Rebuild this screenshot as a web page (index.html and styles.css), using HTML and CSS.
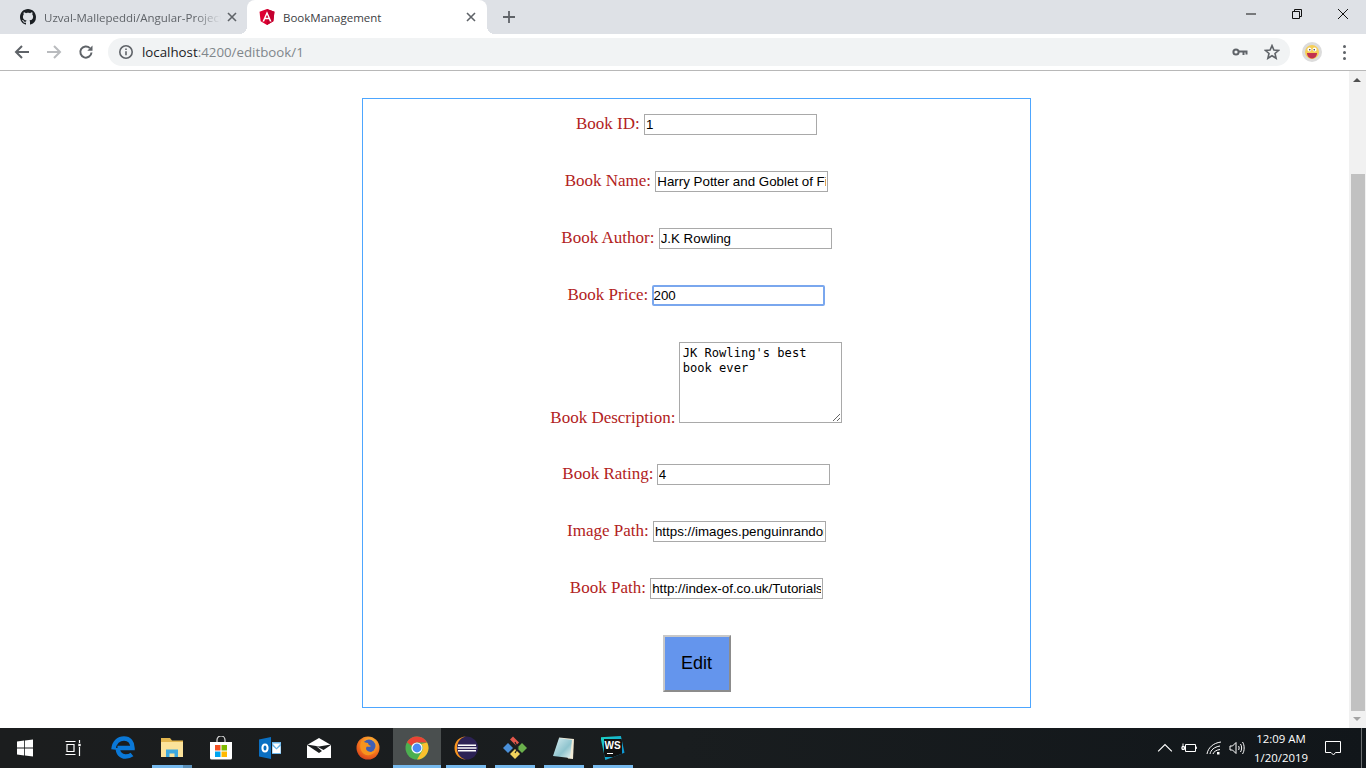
FILE: index.html
```html
<!DOCTYPE html>
<html lang="en">
<head>
    <meta charset="UTF-8">
    <meta name="viewport" content="width=device-width, initial-scale=1.0">
    <title>BookManagement</title>
    <link rel="stylesheet" href="styles.css">
</head>
<body>
<div class="screen">
    <!-- Browser tabs -->
    <div class="tabstrip">
        <div class="tab">
            <svg class="favicon" viewBox="0 0 16 16"><path fill="#1b1f23" d="M8 0C3.58 0 0 3.58 0 8c0 3.54 2.29 6.53 5.47 7.59.4.07.55-.17.55-.38 0-.19-.01-.82-.01-1.49-2.01.37-2.53-.49-2.69-.94-.09-.23-.48-.94-.82-1.13-.28-.15-.68-.52-.01-.53.63-.01 1.08.58 1.23.82.72 1.21 1.87.87 2.33.66.07-.52.28-.87.51-1.07-1.78-.2-3.64-.89-3.64-3.95 0-.87.31-1.59.82-2.15-.08-.2-.36-1.02.08-2.12 0 0 .67-.21 2.2.82.64-.18 1.32-.27 2-.27.68 0 1.36.09 2 .27 1.53-1.04 2.2-.82 2.2-.82.44 1.1.16 1.92.08 2.12.51.56.82 1.27.82 2.15 0 3.07-1.87 3.75-3.65 3.95.29.25.54.73.54 1.48 0 1.07-.01 1.93-.01 2.2 0 .21.15.46.55.38A8.013 8.013 0 0016 8c0-4.42-3.58-8-8-8z"/></svg>
            <span class="tab-title tab-title-fade">Uzval-Mallepeddi/Angular-Project</span>
            <svg class="tab-close" viewBox="0 0 10 10"><path d="M1 1l8 8M9 1l-8 8"/></svg>
        </div>
        <div class="tab tab-active">
            <svg class="favicon" viewBox="0 0 250 250"><path fill="#dd0031" d="M125 0L8 42l18 150 99 58 99-58 18-150z"/><path fill="#c3002f" d="M125 0v250l99-58 18-150z"/><path fill="#fff" d="M125 36L54 196h27l14-35h60l14 35h27L125 36zm21 102h-42l21-50z"/></svg>
            <span class="tab-title">BookManagement</span>
            <svg class="tab-close" viewBox="0 0 10 10"><path d="M1 1l8 8M9 1l-8 8"/></svg>
        </div>
        <svg class="new-tab" viewBox="0 0 14 14"><path d="M7 1v12M1 7h12"/></svg>
        <div class="window-controls">
            <svg viewBox="0 0 12 12"><path d="M1 6h10"/></svg>
            <svg viewBox="0 0 12 12"><path d="M1.5 3.500h7v7h-7zM3.500 3.500v-2h7v7h-2"/></svg>
            <svg viewBox="0 0 12 12"><path d="M1 1l10 10M11 1L1 11"/></svg>
        </div>
    </div>

    <!-- Address bar -->
    <div class="toolbar">
        <div class="nav-btn">
            <svg viewBox="0 0 16 16"><path d="M15 8H2M8 2L2 8l6 6"/></svg>
        </div>
        <div class="nav-btn nav-btn-off">
            <svg viewBox="0 0 16 16"><path d="M1 8h13M8 2l6 6-6 6"/></svg>
        </div>
        <div class="nav-btn">
            <svg viewBox="0 0 16 16"><path d="M13.500 8.500a5.600 5.600 0 1 1-1.600-4.400"/><path class="solid" d="M14.500 1.500v5.200H9.300z"/></svg>
        </div>
        <div class="omnibox">
            <svg class="omni-icon" viewBox="0 0 16 16"><circle cx="8" cy="8" r="6.200"/><path d="M8 7.200v4M8 4.400v1.600"/></svg>
            <span class="url"><span class="url-host">localhost</span>:4200/editbook/1</span>
            <svg class="omni-icon omni-key" viewBox="0 0 16 16"><circle cx="4" cy="8" r="2.600"/><path d="M6.500 7.500H15.500M11.500 7.500V11M14.500 7.500V10.500"/></svg>
            <svg class="omni-icon" viewBox="0 0 16 16"><path d="M8 1.600l1.900 4.400 4.700.4-3.600 3.100 1.100 4.700L8 11.700l-4.100 2.500L5 9.500 1.400 6.400l4.700-.4z"/></svg>
        </div>
        <svg class="avatar" viewBox="0 0 20 20">
            <circle cx="10" cy="10" r="10" fill="#dcdcdc"/>
            <circle cx="10" cy="10" r="7" fill="#f6cf57"/>
            <circle cx="7.400" cy="7.600" r="2" fill="#fff"/>
            <circle cx="12.600" cy="7.600" r="2" fill="#fff"/>
            <circle cx="7.800" cy="7.800" r=".8" fill="#333"/>
            <circle cx="12.200" cy="7.800" r=".8" fill="#333"/>
            <path fill="#c2304f" d="M5 11h10c0 3-2 5.500-5 5.500S5 14 5 11z"/>
        </svg>
        <div class="menu-dots"><i></i><i></i><i></i></div>
    </div>

    <!-- Page -->
    <div class="viewport">
        <div class="page">
            <form class="book-form">
                <div class="field"><label>Book ID:</label> <input class="text-input" type="text" value="1"></div>
                <div class="field"><label>Book Name:</label> <input class="text-input" type="text" value="Harry Potter and Goblet of Fire"></div>
                <div class="field"><label>Book Author:</label> <input class="text-input" type="text" value="J.K Rowling"></div>
                <div class="field field-tight"><label>Book Price:</label> <input class="text-input text-input-focus" type="text" value="200"></div>
                <div class="field field-tight"><label>Book Description:</label> <textarea class="text-area">JK Rowling's best book ever</textarea></div>
                <div class="field field-tight"><label>Book Rating:</label> <input class="text-input" type="text" value="4"></div>
                <div class="field"><label>Image Path:</label> <input class="text-input" type="text" value="https://images.penguinrandomhouse.com/cover/9780439139601"></div>
                <div class="field"><label>Book Path:</label> <input class="text-input" type="text" value="http://index-of.co.uk/Tutorials/Harry-Potter.pdf"></div>
                <div class="field field-submit"><button class="edit-btn" type="button">Edit</button></div>
            </form>
        </div>
        <div class="scrollbar">
            <div class="scroll-arrow scroll-up"></div>
            <div class="scroll-thumb"></div>
            <div class="scroll-arrow scroll-down"></div>
        </div>
    </div>

    <!-- Windows taskbar -->
    <div class="taskbar">
        <div class="task">
            <svg viewBox="0 0 24 24"><path fill="#fff" d="M4 5.600l7.200-1v6.900H4zM12 4.500l8-1.100v8.100h-8zM4 12.500h7.200v6.900l-7.200-1zM12 12.500h8v8.100l-8-1.100z"/></svg>
        </div>
        <div class="task">
            <svg viewBox="1.500 0 24 24" fill="none" stroke="#fff" stroke-width="1.200"><path d="M5 5.500h10M5 18.500h10M6.500 8.500h7v7h-7z"/><path d="M19 4v3M19 11v9"/><path stroke-width="2.400" d="M17.800 9h2.400"/></svg>
        </div>
        <div class="task">
            <svg viewBox="0 0 24 24" fill="none"><path stroke="#0a78d7" stroke-width="4.500" d="M2.500 13.500C3 6 8 2.500 13 2.500c5.500 0 8.500 4 8.500 9.500H6.500M7 12c-.5 5 3 8.500 7.500 8.500 2.500 0 5-.8 6.500-2"/></svg>
        </div>
        <div class="task task-open task-multi">
            <svg viewBox="0 0 24 24"><path fill="#e3b64f" d="M1 2h9l2 2.500h11V21H1z"/><path fill="#fbe29a" d="M1 6h22v15H1z"/><path fill="#3da8de" d="M6 13.500h12V21h-3.500v-3.500h-5V21H6z"/></svg>
        </div>
        <div class="task">
            <svg viewBox="0 0 24 24"><path fill="none" stroke="#ddd" stroke-width="1.200" d="M8 7V4a4 4 0 0 1 8 0v3"/><path fill="#fff" d="M1 6h22v16a1.500 1.500 0 0 1-1.500 1.500h-19A1.500 1.500 0 0 1 1 22z"/><path fill="#f25022" d="M6 9h5.500v5.500H6z"/><path fill="#7fba00" d="M12.500 9H18v5.500h-5.500z"/><path fill="#00a4ef" d="M6 15.500h5.500V21H6z"/><path fill="#ffb900" d="M12.500 15.500H18V21h-5.500z"/></svg>
        </div>
        <div class="task">
            <svg viewBox="0 0 24 24"><path fill="#0a6fc2" d="M1 3.500L13 1v22L1 20.500z"/><path fill="#fff" d="M7 7.500c-2.400 0-3.600 2-3.600 4.500s1.200 4.500 3.600 4.500 3.600-2 3.600-4.500-1.200-4.500-3.600-4.500zm0 2c1 0 1.500 1 1.500 2.500S8 14.500 7 14.500 5.500 13.500 5.500 12 6 9.500 7 9.500z"/><path fill="#6cb6ea" d="M14 6h9v12h-9z"/><path fill="#fff" d="M14.500 7.500h8L18.500 12zM14.500 10l4 3.500 4-3.500v7h-8z"/></svg>
        </div>
        <div class="task">
            <svg viewBox="0 0 24 24"><path fill="#fff" d="M0 9l12-7 12 7v13H0z"/><path fill="#1a1d1e" d="M0 9l12 8 3-2-6-5 7.500 4L24 9v-.5l-12 2-12-2z"/></svg>
        </div>
        <div class="task">
            <svg viewBox="0 0 24 24"><defs><radialGradient id="fox" cx=".6" cy=".3" r=".8"><stop offset="0" stop-color="#ffcb3d"/><stop offset=".6" stop-color="#f2711c"/><stop offset="1" stop-color="#d3381c"/></radialGradient></defs><circle cx="12" cy="12" r="11.500" fill="url(#fox)"/><circle cx="13" cy="10" r="6.500" fill="#3f5fb5"/><path fill="#f7941e" d="M6 4c-3 5-2 11 2 14 4 2.500 10 1 12-4-3 2.500-7 2.500-9 .5-1.500-1.500-1-3 0-4 1 .5 3 .5 4-.5-1.500-.5-3-1.500-3-3-2 0-5-1-6-3z"/></svg>
        </div>
        <div class="task task-active">
            <svg viewBox="0 0 24 24"><circle cx="12" cy="12" r="11.500" fill="#4caf50"/><path fill="#ea4335" d="M2 6.300A11.500 11.500 0 0 1 22.100 6.500H12A5.500 5.500 0 0 0 6.900 10z"/><path fill="#fbc02d" d="M22.100 6.500A11.500 11.500 0 0 1 12 23.500l5-8.500A5.500 5.500 0 0 0 16 8z"/><circle cx="12" cy="12" r="5.600" fill="#fff"/><circle cx="12" cy="12" r="4.400" fill="#4a8af4"/></svg>
        </div>
        <div class="task task-open">
            <svg viewBox="0 0 24 24"><circle cx="12.500" cy="12" r="11.500" fill="#2c2255"/><path fill="#f7941e" d="M12 .5C5.500.5.500 5.500.500 12S5.500 23.500 12 23.500C7 23 3 18 3 12S7 1 12 .5z"/><path fill="#fff" d="M4 8.500h18v1.500H4zM3.500 11.300h19v1.500h-19zM4 14h18v1.500H4z"/></svg>
        </div>
        <div class="task task-open">
            <svg viewBox="0 0 24 24"><path fill="#e2574c" d="M7 3.500L10 .5l6 6-3 3z"/><path fill="#4a90d9" d="M0 12l5-5 5 5-5 5z"/><path fill="#f2d25c" d="M7 18l5-5 5 5-5 5z"/><path fill="#6ab04c" d="M14 12l5-5 5 5-5 5z"/><path fill="none" stroke="#222" stroke-width="1.200" d="M12 6l3 6-3 5"/></svg>
        </div>
        <div class="task task-open">
            <svg viewBox="0 0 24 24"><defs><linearGradient id="note" x1="0" y1="0" x2="1" y2="1"><stop offset="0" stop-color="#d9eef2"/><stop offset=".6" stop-color="#8fc4ce"/><stop offset="1" stop-color="#e9f3f0"/></linearGradient></defs><path fill="#f0ead6" d="M7 1.500l15 1.500-1 20-5-.5z"/><path fill="url(#note)" d="M7 2l13 2-2 18L1 20z"/></svg>
        </div>
        <div class="task task-open">
            <div class="ws-icon"><span class="ws-text">WS</span><i></i></div>
        </div>
        <div class="tray">
            <div class="tray-cell tray-chev">
                <svg viewBox="0 0 14 14"><path d="M1 10l6-6 6 6"/></svg>
            </div>
            <div class="tray-cell tray-batt">
                <svg viewBox="0 0 16 14"><path d="M4.500 3.500h10v7h-10zM14.500 6h1.200v2M.5 7h4M2 2.500v3M1 5.500h2.500v3H1z"/></svg>
            </div>
            <div class="tray-cell tray-wifi">
                <svg viewBox="0 0 16 14"><path d="M1 13C2 7 7 2 15 1M4 13c.8-4 4-7 10-8M7 13c.5-2 3-4 7-4.500"/><path class="solid" d="M11 11h2.500v2.500H11z"/></svg>
            </div>
            <div class="tray-cell tray-vol">
                <svg viewBox="0 0 16 14"><path d="M1 5h2.500L7 1.500v11L3.500 9H1zM9.500 5c.8 1 .8 3 0 4M11.500 3c1.500 2 1.500 6 0 8M13.500 1c2.200 3 2.200 9 0 12"/></svg>
            </div>
            <div class="clock"><span>12:09 AM</span><span>1/20/2019</span></div>
            <div class="tray-cell tray-notif">
                <svg viewBox="0 0 16 16"><path d="M.5 1.500h15v11h-5l-2 2.500-2.500-2.500H.5z"/></svg>
            </div>
            <div class="show-desktop"></div>
        </div>
    </div>
</div>
</body>
</html>
```
FILE: styles.css
```css
html, body {
    margin: 0;
    padding: 0;
    overflow: hidden;
}

.screen {
    width: 1366px;
    height: 768px;
    display: flex;
    flex-direction: column;
    background-color: #fff;
}

/* tabs */
.tabstrip {
    height: 34px;
    display: flex;
    align-items: stretch;
    background-color: #dee1e6;
    font-family: "Open Sans", sans-serif;
    font-size: 11.5px;
    flex: none;
}

.tab {
    width: 247px;
    box-sizing: border-box;
    padding: 0 10px 0 20px;
    display: flex;
    align-items: center;
    position: relative;
    color: #5f6368;
}

.tab-active {
    width: 240px;
    padding: 0 11px 0 12px;
    background-color: #fff;
    border-radius: 8px 8px 0 0;
    color: #3c4043;
}

.tab-active::before,
.tab-active::after {
    content: "";
    position: absolute;
    bottom: 0;
    width: 8px;
    height: 8px;
}

.tab-active::before {
    left: -8px;
    background: radial-gradient(circle at 0 0, transparent 8px, #fff 8px);
}

.tab-active::after {
    right: -8px;
    background: radial-gradient(circle at 100% 0, transparent 8px, #fff 8px);
}

.favicon {
    width: 16px;
    height: 16px;
    flex: none;
}

.tab-title {
    margin-left: 8px;
    flex: 1;
    white-space: nowrap;
    overflow: hidden;
}

.tab-title-fade {
    -webkit-mask-image: linear-gradient(to right, #000 85%, transparent 100%);
    mask-image: linear-gradient(to right, #000 85%, transparent 100%);
}

.tab-close {
    width: 10px;
    height: 10px;
    margin-left: 6px;
    flex: none;
    fill: none;
    stroke: #5f6368;
    stroke-width: 1.6;
}

.new-tab {
    width: 14px;
    height: 14px;
    margin: 10px 0 0 15px;
    fill: none;
    stroke: #5f6368;
    stroke-width: 1.8;
}

.window-controls {
    margin-left: auto;
    display: flex;
    padding: 8px 17px 0 0;
    gap: 34px;
    height: 12px;
}

.window-controls svg {
    width: 12px;
    height: 12px;
    fill: none;
    stroke: #111;
    stroke-width: 1;
}

/* address bar */
.toolbar {
    height: 36px;
    box-sizing: content-box;
    display: flex;
    align-items: center;
    padding-left: 6px;
    background-color: #fff;
    border-bottom: 1px solid #b8b8b8;
    flex: none;
}

.nav-btn {
    width: 32px;
    display: flex;
    justify-content: center;
}

.nav-btn svg {
    width: 16px;
    height: 16px;
    fill: none;
    stroke: #5f6368;
    stroke-width: 2;
}

.nav-btn .solid {
    fill: #5f6368;
    stroke: none;
}

.nav-btn-off svg {
    stroke: #b9bbbe;
}

.omnibox {
    width: 1182px;
    height: 28px;
    margin-left: 6px;
    box-sizing: border-box;
    padding: 0 10px;
    display: flex;
    align-items: center;
    background-color: #f1f3f4;
    border-radius: 14px;
}

.omni-icon {
    width: 16px;
    height: 16px;
    flex: none;
    fill: none;
    stroke: #5f6368;
    stroke-width: 1.6;
}

.omni-key {
    margin-right: 16px;
    stroke-width: 2;
}

.url {
    flex: 1;
    margin-left: 8px;
    font-family: "Open Sans", sans-serif;
    font-size: 13.3px;
    color: #80868b;
}

.url-host {
    color: #202124;
}

.avatar {
    width: 20px;
    height: 20px;
    margin-left: 12px;
    flex: none;
}

.menu-dots {
    margin-left: 21px;
    display: flex;
    flex-direction: column;
    gap: 3px;
}

.menu-dots i {
    display: block;
    width: 3px;
    height: 3px;
    border-radius: 50%;
    background-color: #5f6368;
}

/* page */
.viewport {
    flex: 1;
    display: flex;
    min-height: 0;
}

.page {
    flex: 1;
    overflow: hidden;
}

.book-form {
    width: 669px;
    box-sizing: border-box;
    margin: 27px 0 0 362px;
    padding: 15px 0 15px;
    border: 1px solid #4da6ff;
    text-align: center;
    font-family: "Liberation Serif", serif;
    font-size: 17px;
    color: #b22222;
}

.field {
    margin-bottom: 36px;
}

.field-tight input,
.field-tight textarea {
    margin: 0 1px 0 -1px;
}

.field-submit {
    margin-bottom: 0;
}

.text-input {
    width: 173px;
    height: 21px;
    box-sizing: border-box;
    padding: 1px;
    border: 1px solid #a9a9a9;
    font-family: "Liberation Sans", sans-serif;
    font-size: 13.33px;
    color: #000;
}

.text-input-focus {
    border: 2px solid #7aa7ee;
    border-radius: 2px;
    padding: 0;
    outline: none;
}

.text-area {
    width: 163px;
    height: 81px;
    box-sizing: border-box;
    padding: 3px 3px 1px;
    border: 1px solid #a9a9a9;
    font-family: "DejaVu Sans Mono", monospace;
    font-size: 12.1px;
    line-height: 15px;
    color: #000;
}

.edit-btn {
    width: 68px;
    height: 57px;
    box-sizing: border-box;
    background-color: #6495ed;
    border: 2px solid;
    border-color: #c8c8c8 #8c8c8c #8c8c8c #c8c8c8;
    font-family: "Liberation Sans", sans-serif;
    font-size: 18px;
    color: #000;
    padding: 0;
}

/* scrollbar */
.scrollbar {
    width: 17px;
    flex: none;
    display: flex;
    flex-direction: column;
    position: relative;
    background-color: #f1f1f1;
}

.scroll-arrow {
    position: absolute;
    left: 4px;
    width: 0;
    height: 0;
    border-left: 4px solid transparent;
    border-right: 4px solid transparent;
}

.scroll-up {
    top: 7px;
    border-bottom: 4px solid #505050;
}

.scroll-down {
    bottom: 7px;
    border-top: 4px solid #a3a3a3;
}

.scroll-thumb {
    margin: 103px 1px 0 2px;
    height: 537px;
    background-color: #c1c1c1;
}

/* taskbar */
.taskbar {
    height: 40px;
    flex: none;
    display: flex;
    background: linear-gradient(to right, #1b1d1e, #191d1f 50%, #11161a);
}

.task {
    width: 49px;
    height: 40px;
    flex: none;
    box-sizing: border-box;
    display: flex;
    justify-content: center;
    align-items: center;
    position: relative;
}

.task svg {
    width: 24px;
    height: 24px;
}

.task-open::after {
    content: "";
    position: absolute;
    left: 5px;
    right: 4px;
    bottom: 0;
    height: 3px;
    background-color: #76b9ed;
}

.task-multi::after {
    background: linear-gradient(to right, #76b9ed 31px, #5a8fb8 31px);
}

.task-active {
    background-color: #4a4f4f;
    background-clip: padding-box;
    border-left: 1px solid transparent;
}

.task-active::after {
    content: "";
    position: absolute;
    left: 0;
    right: 0;
    bottom: 0;
    height: 3px;
    background-color: #76b9ed;
}

.ws-icon {
    width: 24px;
    height: 24px;
    box-sizing: border-box;
    padding: 3px;
    position: relative;
    background: linear-gradient(135deg, #1ed4c4, #0a88d8);
    clip-path: polygon(0 5%, 85% 0, 100% 70%, 20% 100%);
}

.ws-text {
    display: block;
    height: 18px;
    box-sizing: border-box;
    padding-top: 1px;
    background-color: #111;
    color: #fff;
    font-family: "Liberation Sans", sans-serif;
    font-size: 10px;
    font-weight: bold;
    line-height: 11px;
    text-align: center;
}

.ws-icon i {
    position: absolute;
    left: 6px;
    bottom: 6px;
    width: 6px;
    height: 1px;
    background-color: #fff;
}

.tray {
    margin-left: auto;
    display: flex;
    align-items: center;
    height: 40px;
    color: #fff;
}

.tray-cell {
    display: flex;
    justify-content: center;
    align-items: center;
    height: 40px;
}

.tray-cell svg {
    width: 16px;
    height: 16px;
    fill: none;
    stroke: #fff;
    stroke-width: 1;
}

.tray-cell .solid {
    fill: #fff;
    stroke: none;
}

.tray-chev { width: 24px; }
.tray-batt { width: 24px; }
.tray-wifi { width: 26px; }
.tray-vol { width: 20px; }
.tray-notif { width: 36px; }

.clock {
    width: 68px;
    display: flex;
    flex-direction: column;
    align-items: center;
    gap: 3px;
    font-family: "Open Sans", sans-serif;
    font-size: 11.4px;
    line-height: 16px;
}

.show-desktop {
    width: 5px;
    height: 40px;
    margin-left: 10px;
    box-sizing: border-box;
    border-left: 1px solid #6b6e70;
}
```
